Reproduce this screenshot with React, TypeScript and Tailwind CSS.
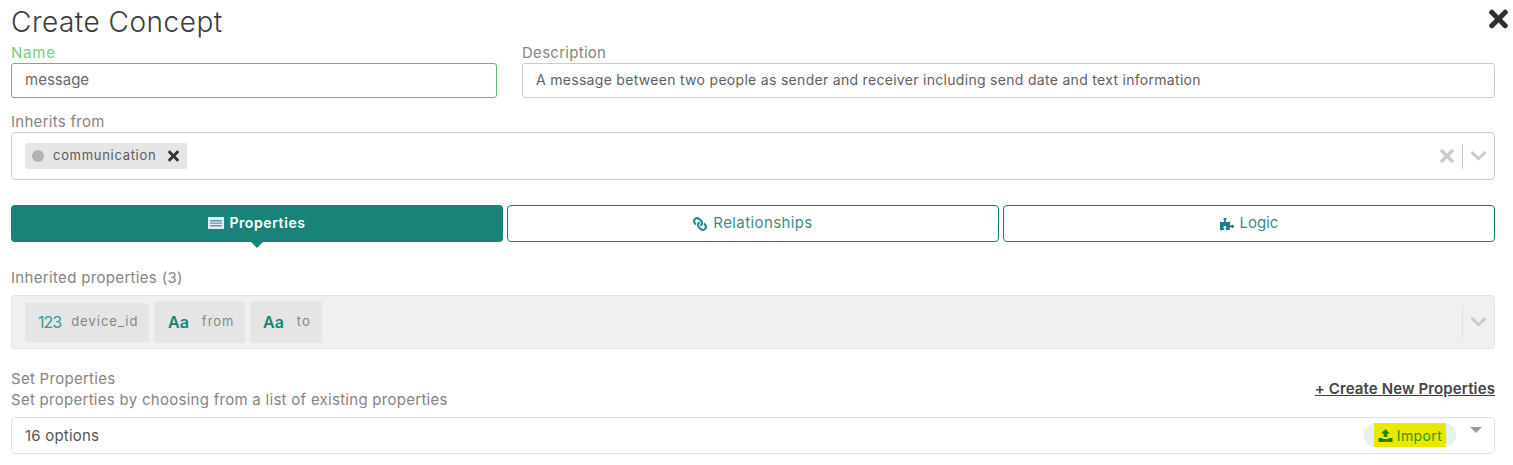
import React from "react";
import { FaLink, FaPuzzlePiece, FaTimes } from "react-icons/fa";

const font = "[font-family:Inter,'Liberation_Sans',sans-serif]";

function Chevron() {
  return (
    <svg width="15" height="10" viewBox="4.2 7 11.6 7.6" className="text-[#cccccc]" fill="currentColor">
      <path d="M4.516 7.548c.436-.446 1.043-.481 1.576 0L10 11.295l3.908-3.747c.533-.481 1.141-.446 1.574 0 .436.445.408 1.197 0 1.615-.406.418-4.695 4.502-4.695 4.502a1.095 1.095 0 0 1-1.576 0S5.122 9.581 4.516 9.163c-.409-.418-.436-1.17 0-1.615z" />
    </svg>
  );
}

function Chip({ icon, label, iconClass, boxClass }: { icon: string; label: string; iconClass: string; boxClass: string }) {
  return (
    <div className={`flex items-center rounded-[3px] bg-[#e5e5e5] ${boxClass}`}>
      <span className={iconClass}>{icon}</span>
      <span className="text-[13px] tracking-[1px] text-[#858585]">{label}</span>
    </div>
  );
}

export default function App() {
  return (
    <div className={`${font} h-[465px] w-[1513px] overflow-hidden bg-white pl-[11px] pr-[18px] text-[#555]`}>
      {/* header */}
      <div className="relative flex h-[44px] items-center">
        <h1 className="-mt-[1px] text-[28px] font-light leading-[32px] tracking-[0.5px] text-[#3d3d3d]">Create Concept</h1>
        <FaTimes className="absolute -right-[13px] top-[5px] h-[28px] w-[19px] text-[#2f2f2f]" />
      </div>

      {/* name + description */}
      <div className="flex gap-[25px]">
        <div className="flex w-[486px] flex-col">
          <label className="h-[19px] text-[15px] leading-[18px] tracking-[0.8px] text-[#6fcf7f]">Name</label>
          <div className="flex h-[35px] items-center rounded-[3px] border border-[#5cbf6c] pl-[13px] text-[15px] text-[#6a6a6a]">message</div>
        </div>
        <div className="flex flex-1 flex-col">
          <label className="h-[19px] text-[15px] leading-[18px] tracking-[0.28px] text-[#858585]">Description</label>
          <div className="flex h-[35px] items-center rounded-[3px] border border-[#cccccc] pb-[2px] pl-[13px] text-[14px] tracking-[0.3px] text-[#5f5f5f]">
            A message between two people as sender and receiver including send date and text information
          </div>
        </div>
      </div>

      {/* inherits from */}
      <div className="mt-[14px] text-[15px] leading-[20px] tracking-[0.28px] text-[#858585]">Inherits from</div>
      <div className="flex h-[48px] items-center justify-between rounded-[4px] border border-[#cccccc] pl-[13px] pr-[8px]">
        <div className="flex h-[26px] items-center rounded-[2px] bg-[#e6e6e6] pl-[7px] pr-[8px]">
          <span className="h-[12px] w-[12px] rounded-full bg-[#b3b3b3]" />
          <span className="ml-[9px] text-[13px] tracking-[0.7px] text-[#5a5a5a]">communication</span>
          <FaTimes className="ml-[12px] h-[16px] w-[11px] text-[#333]" />
        </div>
        <div className="flex items-center">
          <FaTimes className="h-[20px] w-[14px] text-[#cccccc]" />
          <span className="ml-[8px] mr-[8px] h-[25px] w-[1px] bg-[#cccccc]" />
          <Chevron />
        </div>
      </div>

      {/* tabs */}
      <div className="mt-[25px] grid grid-cols-3 gap-[4px]">
        <div className="relative flex h-[37px] items-center justify-center gap-[5px] rounded-[4px] bg-[#19837a] pb-[2px] text-[14px] font-semibold tracking-[0.6px] text-white">
          <svg width="16" height="12" viewBox="0 0 16 12"><rect x="0.5" y="0.5" width="15" height="11" fill="#e9f2f7" stroke="#dce8ef" /><rect x="2" y="3" width="12" height="1.5" fill="#5f8fb5" /><rect x="2" y="5.5" width="12" height="1.5" fill="#7aa8c4" /><rect x="2" y="8" width="12" height="1.5" fill="#5f8fb5" /></svg>
          <span>Properties</span>
          <span className="absolute -bottom-[6px] left-1/2 h-0 w-0 -translate-x-1/2 border-x-[6px] border-t-[6px] border-x-transparent border-t-[#19837a]" />
        </div>
        <div className="flex h-[37px] items-center justify-center gap-[6px] rounded-[4px] border border-[#19837a] text-[15px] tracking-[0.4px] text-[#3f8a92]">
          <FaLink className="h-[14px] w-[14px] -scale-x-100 text-[#2a8a94]" />
          <span>Relationships</span>
        </div>
        <div className="flex h-[37px] items-center justify-center gap-[6px] rounded-[4px] border border-[#19837a] text-[15px] text-[#3f8a92]">
          <FaPuzzlePiece className="h-[14px] w-[14px] text-[#1c7c84]" />
          <span>Logic</span>
        </div>
      </div>

      {/* inherited properties */}
      <div className="mt-[26px] text-[15px] leading-[20px] tracking-[0.33px] text-[#858585]">Inherited properties (3)</div>
      <div className="mt-[7px] flex h-[54px] items-center justify-between rounded-[4px] border border-[#e3e3e3] bg-[#f0f0f0] pl-[13px] pr-[8px]">
        <div className="flex items-center gap-[5px]">
          <Chip icon="123" label="device_id" iconClass="mr-[10px] text-[16px] leading-none tracking-[-1px] text-[#2a9d96]" boxClass="h-[39px] w-[124px] pl-[13px]" />
          <Chip icon="Aa" label="from" iconClass="mr-[13px] text-[16px] font-semibold leading-none text-[#19837a]" boxClass="h-[42px] w-[91px] pl-[14px]" />
          <Chip icon="Aa" label="to" iconClass="mr-[13px] text-[16px] font-semibold leading-none text-[#19837a]" boxClass="h-[42px] w-[72px] pl-[13px]" />
        </div>
        <div className="flex items-center">
          <span className="mr-[8px] h-[32px] w-[1px] bg-[#dddddd]" />
          <Chevron />
        </div>
      </div>

      {/* set properties */}
      <div className="mt-[19px] flex items-center justify-between">
        <div className="text-[15px] leading-[21px] tracking-[0.28px] text-[#858585]">
          <div>Set Properties</div>
          <div>Set properties by choosing from a list of existing properties</div>
        </div>
        <a className="text-[15px] font-semibold leading-[20px] tracking-[0.12px] text-[#444] underline">+ Create New Properties</a>
      </div>
      <div className="mt-[7px] flex h-[37px] items-center justify-between rounded-[5px] border border-[#e0e0e0] pl-[13px] pr-[12px]">
        <span className="pt-[2px] text-[15px] tracking-[0.2px] text-[#555]">16 options</span>
        <div className="flex items-center">
          <div className="mb-[1px] flex h-[24px] w-[92px] items-center justify-center rounded-full bg-[#e6eff2]">
            <div className="flex h-[24px] w-[72px] items-center justify-center gap-[4px] bg-[#e8e800] text-[14px] tracking-[0.4px] text-[#2d9a00]">
              <svg width="15" height="13" viewBox="0 0 14 13" fill="#1e8500"><path d="M7 0 L11.5 4.5 H8.8 V8 H5.2 V4.5 H2.5 Z" /><path d="M0 9 H4 V10 H10 V9 H14 V13 H0 Z" /></svg>
              <span>Import</span>
            </div>
          </div>
          <span className="mb-[12px] ml-[14px] h-0 w-0 border-x-[6px] border-t-[6px] border-x-transparent border-t-[#999]" />
        </div>
      </div>
    </div>
  );
}
